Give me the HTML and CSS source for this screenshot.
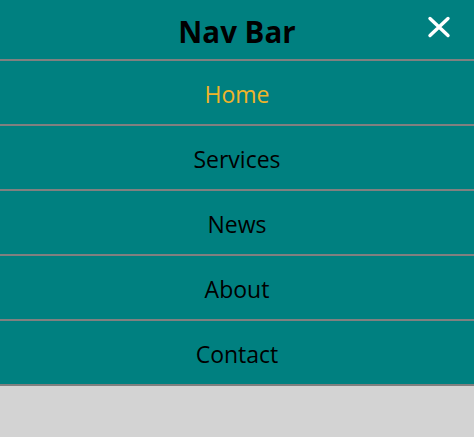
FILE: index.html
```html
<!DOCTYPE html>
<html>
<head>
<meta charset="utf-8">
<link rel="stylesheet" href="styles.css">
</head>
<body>
<nav class="nav">
  <div class="nav-header">
    <h1 class="nav-title">Nav Bar</h1>
    <button class="close-btn" aria-label="Close">
      <svg width="24" height="24" viewBox="0 0 24 24"><path d="M3 3.5 L21 20.5 M21 3.5 L3 20.5" stroke="#fff" stroke-width="3.4" stroke-linecap="round"/></svg>
    </button>
  </div>
  <ul class="nav-list">
    <li class="nav-item active">Home</li>
    <li class="nav-item">Services</li>
    <li class="nav-item">News</li>
    <li class="nav-item">About</li>
    <li class="nav-item">Contact</li>
  </ul>
</nav>
</body>
</html>
```
FILE: styles.css
```css
html, body {
  margin: 0;
  padding: 0;
  background: #d3d3d3;
  font-family: "Open Sans", "Noto Sans", sans-serif;
}
.nav {
  background: #008080;
}
.nav-header {
  position: relative;
  height: 59px;
  display: flex;
  align-items: center;
  justify-content: center;
  border-bottom: 2px solid #808080;
}
.nav-title {
  margin: 0;
  font-size: 29.5px;
  font-weight: 700;
  color: #000;
  line-height: 1;
  padding-top: 4px;
}
.close-btn {
  position: absolute;
  right: 23px;
  top: 15px;
  background: none;
  border: 0;
  padding: 0;
  width: 24px;
  height: 24px;
}
.close-btn svg { display: block; }
.nav-list {
  list-style: none;
  margin: 0;
  padding: 0;
}
.nav-item {
  height: 65px;
  box-sizing: border-box;
  padding-top: 2px;
  display: flex;
  align-items: center;
  justify-content: center;
  border-bottom: 2px solid #808080;
  font-size: 23px;
  color: #000;
}
.nav-item.active {
  color: #f0b429;
}
```
